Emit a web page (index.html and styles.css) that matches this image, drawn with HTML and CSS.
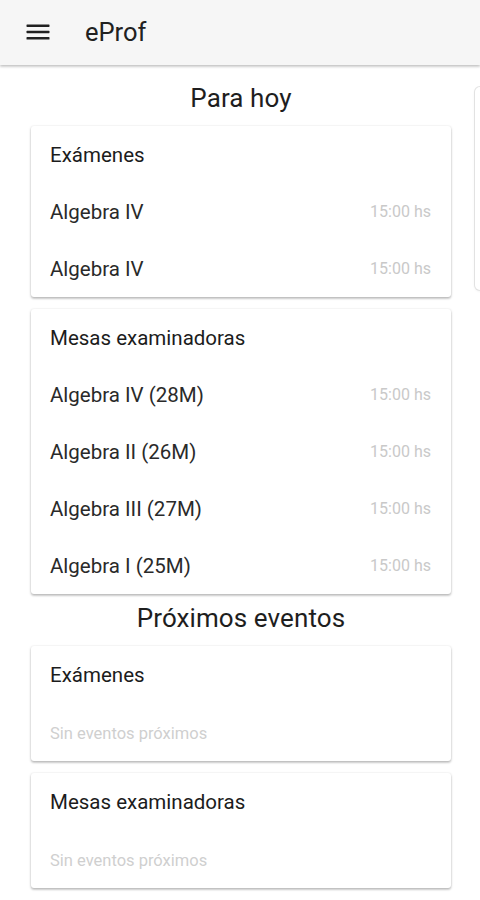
FILE: index.html
```html
<!DOCTYPE html>
<html lang="es">
<head>
<meta charset="utf-8">
<title>eProf</title>
<link rel="stylesheet" href="styles.css">
</head>
<body>
<header class="appbar">
  <svg class="menu-icon" width="24" height="24" viewBox="0 0 24 24" aria-hidden="true">
    <rect x="0.5" y="4.5" width="23" height="2.4" rx="0.6" fill="#212121"/>
    <rect x="0.5" y="10.8" width="23" height="2.4" rx="0.6" fill="#212121"/>
    <rect x="0.5" y="17.1" width="23" height="2.4" rx="0.6" fill="#212121"/>
  </svg>
  <span class="app-title">eProf</span>
</header>
<main class="pager">
  <section class="slide">
    <h2 class="section-title">Para hoy</h2>
    <div class="card">
      <div class="row head">Exámenes</div>
      <div class="row"><span>Algebra IV</span><span class="time">15:00 hs</span></div>
      <div class="row"><span>Algebra IV</span><span class="time">15:00 hs</span></div>
    </div>
    <div class="card">
      <div class="row head">Mesas examinadoras</div>
      <div class="row"><span>Algebra IV (28M)</span><span class="time">15:00 hs</span></div>
      <div class="row"><span>Algebra II (26M)</span><span class="time">15:00 hs</span></div>
      <div class="row"><span>Algebra III (27M)</span><span class="time">15:00 hs</span></div>
      <div class="row"><span>Algebra I (25M)</span><span class="time">15:00 hs</span></div>
    </div>
    <h2 class="section-title second">Próximos eventos</h2>
    <div class="card">
      <div class="row head">Exámenes</div>
      <div class="row empty">Sin eventos próximos</div>
    </div>
    <div class="card last">
      <div class="row head">Mesas examinadoras</div>
      <div class="row empty">Sin eventos próximos</div>
    </div>
  </section>
  <section class="slide next">
    <div class="card peek"></div>
  </section>
</main>
</body>
</html>
```
FILE: styles.css
```css
html, body {
  margin: 0;
  padding: 0;
  background: #ffffff;
  overflow: hidden;
  height: 900px;
}
body {
  font-family: Roboto, "Liberation Sans", Arial, sans-serif;
  color: #212121;
}
.appbar {
  height: 65px;
  background: #f6f6f6;
  display: flex;
  align-items: center;
  padding-left: 26px;
  box-shadow: 0 1px 3px rgba(0,0,0,0.22), 0 2px 2px rgba(0,0,0,0.08);
  position: relative;
  z-index: 2;
}
.menu-icon {
  display: block;
  margin-top: -1px;
}
.app-title {
  margin-left: 35px;
  font-size: 25.5px;
  line-height: 30px;
  margin-top: -1px;
  color: #212121;
}
.pager {
  display: flex;
  overflow: hidden;
  width: 480px;
}
.slide {
  flex: 0 0 475px;
  box-sizing: border-box;
  padding: 0 24px 0 31px;
}
.slide.next {
  flex: 0 0 420px;
  padding: 22px 0 0 0;
}
.section-title {
  margin: 18px 0 13px;
  text-align: center;
  font-size: 26px;
  line-height: 30px;
  font-weight: 400;
  letter-spacing: 0.1px;
  color: #1e1e1e;
}
.section-title.second {
  margin: 0 0 16px;
  line-height: 24px;
}
.card {
  background: #fff;
  border-radius: 3px;
  box-shadow: 0 1px 3px rgba(0,0,0,0.2), 0 2px 2px rgba(0,0,0,0.12), 0 0 2px rgba(0,0,0,0.06);
  margin-bottom: 12px;
}
.card.peek {
  height: 203px;
  border-radius: 5px;
  box-shadow: 0 0 0 1px #e2e2e2, 0 1px 3px rgba(0,0,0,0.1);
  margin-top: 0;
}
.row {
  height: 57px;
  display: flex;
  align-items: center;
  justify-content: space-between;
  padding: 0 20px 0 19px;
  font-size: 20.5px;
  color: #2a2a2a;
}
.row.head {
  color: #1c1c1c;
}
.time {
  font-size: 16px;
  color: #c9c9c9;
}
.row.empty {
  font-size: 16.5px;
  color: #cfcfcf;
  height: 58px;
  padding-top: 3px;
  box-sizing: border-box;
}
```
